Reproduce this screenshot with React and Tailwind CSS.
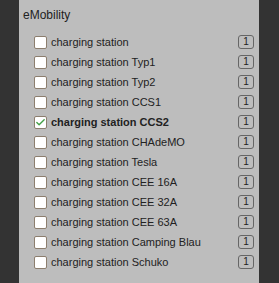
import { Check } from "lucide-react";

const items = [
  "charging station",
  "charging station Typ1",
  "charging station Typ2",
  "charging station CCS1",
  "charging station CCS2",
  "charging station CHAdeMO",
  "charging station Tesla",
  "charging station CEE 16A",
  "charging station CEE 32A",
  "charging station CEE 63A",
  "charging station Camping Blau",
  "charging station Schuko",
];

export default function App() {
  return (
    <div
      className="w-[279px] h-[283px] bg-[#333333] overflow-hidden"
      style={{ fontFamily: '"Liberation Sans", Arial, sans-serif' }}
    >
      <div className="ml-[19px] w-[240px] h-full bg-[#bdbdbd] pl-[4px] pt-[8px]">
        <div className="text-[12px] leading-[14px] text-[#222]">eMobility</div>
        <ul className="mt-[10px]">
          {items.map((label) => {
            const checked = label === "charging station CCS2";
            return (
              <li key={label} className="h-[20px] flex items-center pl-[11px] pr-[5px]">
                <span className="w-[13px] h-[13px] bg-white border border-[#8c7e6e] rounded-[2px] flex items-center justify-center shrink-0">
                  {checked && <Check className="w-[11px] h-[11px] text-[#43a047]" strokeWidth={3} />}
                </span>
                <span
                  className={
                    "ml-[4px] text-[11px] text-[#222] whitespace-nowrap " +
                    (checked ? "font-bold" : "")
                  }
                >
                  {label}
                </span>
                <span className="ml-auto w-[16px] h-[14px] border border-[#666] rounded-[3px] flex items-center justify-center text-[10px] leading-none text-[#222]">
                  1
                </span>
              </li>
            );
          })}
        </ul>
      </div>
    </div>
  );
}
